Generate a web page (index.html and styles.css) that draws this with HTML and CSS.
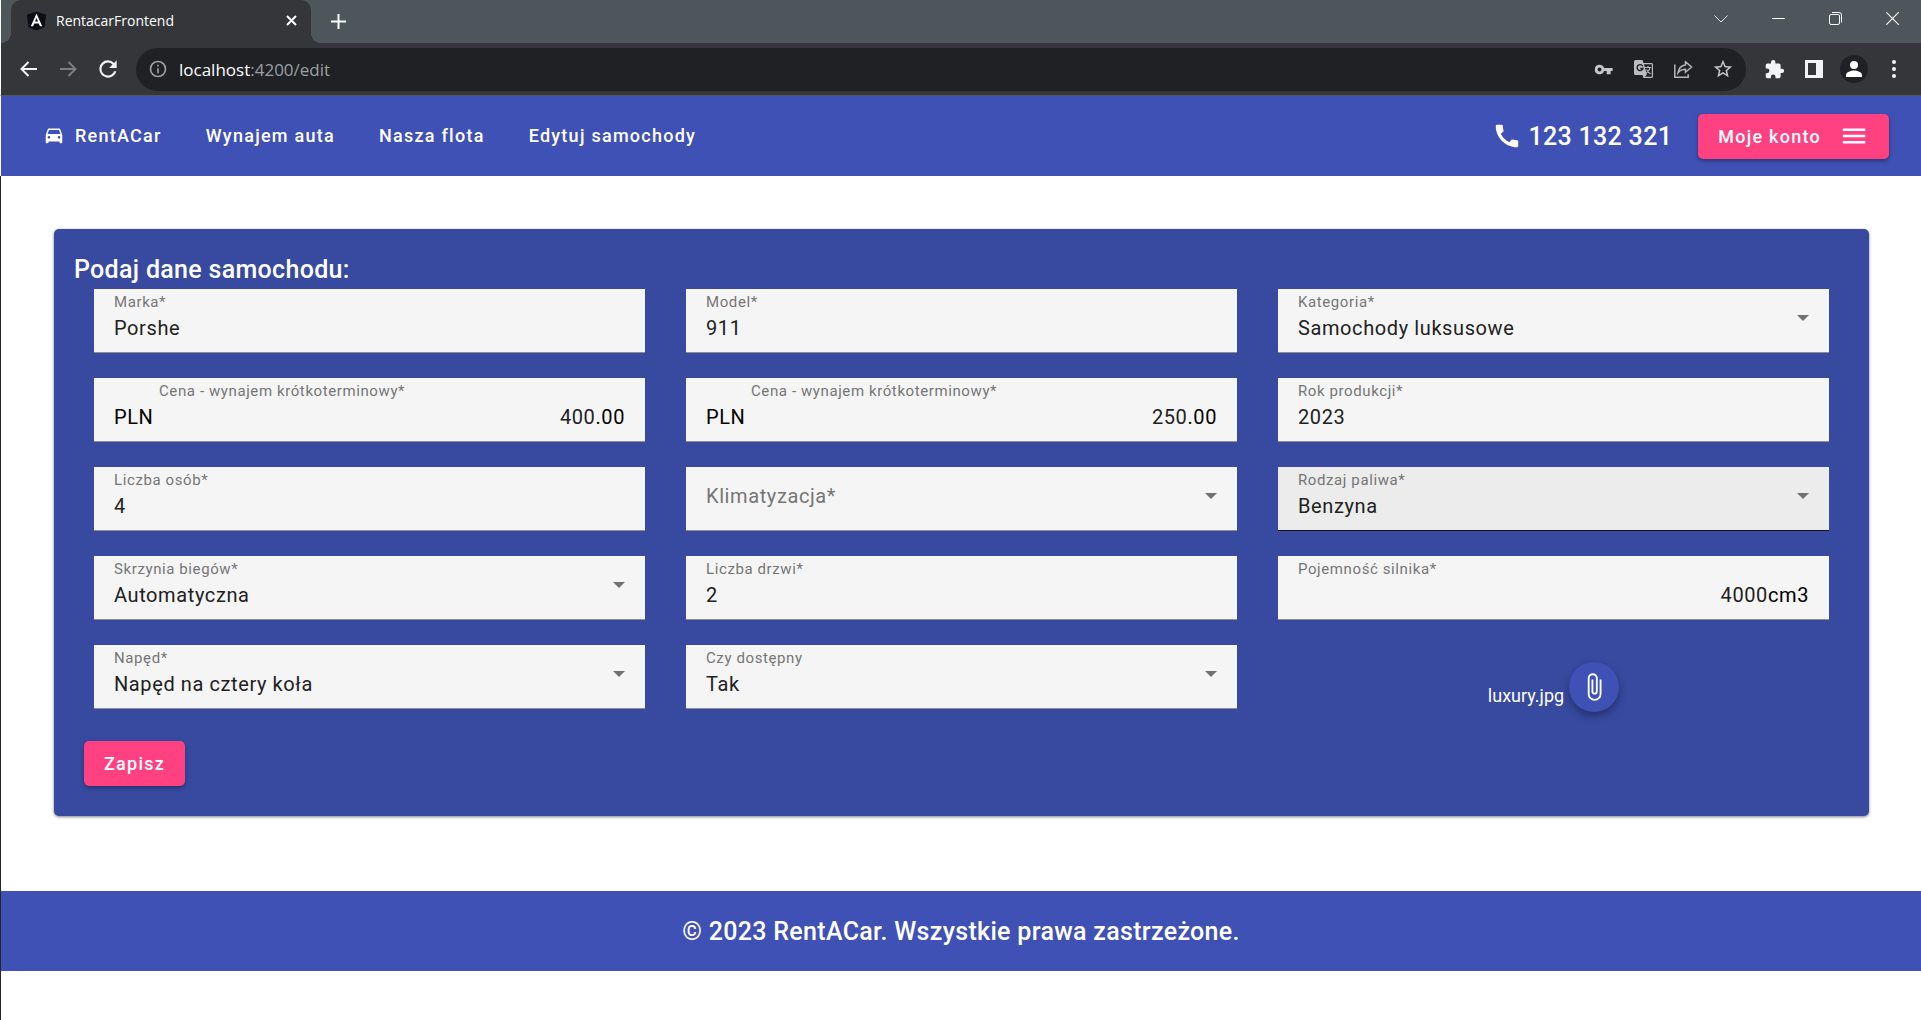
FILE: index.html
```html
<!DOCTYPE html>
<html lang="pl">
<head>
<meta charset="utf-8">
<meta name="viewport" content="width=device-width, initial-scale=1">
<title>RentacarFrontend</title>
<link rel="stylesheet" href="styles.css">
</head>
<body>
<div class="browser">
  <div class="tabstrip">
    <div class="tab">
      <svg class="tab-icon" viewBox="0 0 20 20"><path fill="#0c0e16" d="M10 0l10 3.500-1.500 13L10 20l-8.500-3.500L0 3.500z"/><path fill="#fff" fill-rule="evenodd" d="M10 2L4 15.500h2.400l1.200-3h4.800l1.200 3H16zM10 6.800l1.600 3.800H8.400z"/></svg>
      <span class="tab-title">RentacarFrontend</span>
      <button class="tab-close" aria-label="Zamknij kartę"><svg width="11" height="11" viewBox="0 0 11 11"><path d="M1 1l9 9M10 1l-9 9" stroke="#fff" stroke-width="2"/></svg></button>
    </div>
    <button class="tab-new" aria-label="Nowa karta"><svg width="15" height="15" viewBox="0 0 15 15"><path d="M7.500 0v15M0 7.500h15" stroke="#fff" stroke-width="2"/></svg></button>
    <div class="window-controls">
      <button aria-label="Szukaj kart"><svg width="14" height="8" viewBox="0 0 14 8"><path d="M.5.5L7 7 13.500.5" fill="none" stroke="#e4e6e7"/></svg></button>
      <button aria-label="Minimalizuj"><svg width="13" height="13" viewBox="0 0 13 13"><path d="M0 6.500h13" stroke="#fff"/></svg></button>
      <button aria-label="Przywróć"><svg width="13" height="13" viewBox="0 0 13 13"><g fill="none" stroke="#fff"><rect x=".5" y="2.500" width="10" height="10" rx="1.500"/><path d="M3 .5h7a2.500 2.500 0 0 1 2.500 2.500v7.500"/></g></svg></button>
      <button aria-label="Zamknij"><svg width="13" height="13" viewBox="0 0 13 13"><path d="M0 0l13 13M13 0L0 13" stroke="#fff" stroke-width="1.200"/></svg></button>
    </div>
  </div>
  <div class="toolbar">
    <button class="tool" aria-label="Wstecz"><svg width="17" height="16" viewBox="0 0 17 16"><path d="M17 8H2M8.500 1l-7 7 7 7" fill="none" stroke="#f1f3f4" stroke-width="2"/></svg></button>
    <button class="tool" aria-label="Dalej"><svg width="17" height="16" viewBox="0 0 17 16"><path d="M0 8h15M8.500 1l7 7-7 7" fill="none" stroke="#7d7e81" stroke-width="2"/></svg></button>
    <button class="tool" aria-label="Odśwież"><svg width="26" height="26" viewBox="0 0 24 24"><path fill="#f1f3f4" d="M17.650 6.350A7.960 7.960 0 0 0 12 4a8 8 0 1 0 7.730 10h-2.080A6 6 0 1 1 12 6c1.660 0 3.140.69 4.220 1.780L13 11h7V4z"/></svg></button>
    <div class="omnibox">
      <svg width="20" height="20" viewBox="0 0 24 24"><path fill="#9aa0a6" d="M11 7h2v2h-2zm0 4h2v6h-2zm1-9a10 10 0 1 0 0 20 10 10 0 0 0 0-20zm0 18a8 8 0 1 1 0-16 8 8 0 0 1 0 16z"/></svg>
      <span class="url"><span class="url-host">localhost</span>:4200/edit</span>
      <button class="tool" aria-label="Hasła"><svg width="19" height="19" viewBox="0 0 24 24"><path fill="#c4c7ca" d="M12.650 10A6 6 0 0 0 7 6a6 6 0 1 0 5.650 8H16v4h5v-4h2.500v-4zM7 14.500a2.500 2.500 0 1 1 0-5 2.500 2.500 0 0 1 0 5z"/></svg></button>
      <button class="tool" aria-label="Przetłumacz"><svg width="19" height="19" viewBox="0 0 19 19"><path fill="#babdc0" d="M1.500 0h7l1 3H17.500A1.500 1.500 0 0 1 19 4.500v12a1.500 1.500 0 0 1-1.500 1.500H9.500l-1-3h-7A1.500 1.500 0 0 1 0 13.500v-12A1.500 1.500 0 0 1 1.500 0z"/><path fill="#202124" d="M10 4.200h7.800v12.600h-6.900l2-2.200z"/><path d="M8.800 6.200A3 3 0 1 0 9 8.500H6.200" fill="none" stroke="#202124" stroke-width="1.400"/><path d="M11 7.500h6M14 6v1.500M16 7.500c-.5 2.500-2 4.500-4 5.500M12.500 9.500c1 2 2.500 3.500 4.200 4.200" fill="none" stroke="#babdc0" stroke-width="1.100"/></svg></button>
      <button class="tool" aria-label="Udostępnij"><svg width="19" height="18" viewBox="0 0 19 18"><g fill="none" stroke="#b4b7ba" stroke-width="1.500"><path d="M.8 4.500v12.700h13.400v-3"/><path d="M11.500 1.800l6 5.200-6 5.200V9.200c-3.500 0-5.500 1-7.500 3.600.6-4.500 3-7.400 7.500-7.900z"/></g></svg></button>
      <button class="tool" aria-label="Dodaj do zakładek"><svg width="22" height="22" viewBox="0 0 24 24"><path fill="#c8cbce" d="M22 9.240l-7.190-.62L12 2 9.190 8.630 2 9.240l5.460 4.730L5.820 21 12 17.270 18.180 21l-1.630-7.030zM12 15.400l-3.760 2.270 1-4.280-3.320-2.880 4.380-.38L12 6.100l1.710 4.040 4.380.38-3.320 2.880 1 4.280z"/></svg></button>
    </div>
    <button class="tool" aria-label="Rozszerzenia"><svg width="21" height="21" viewBox="0 0 24 24"><path fill="#f1f3f4" d="M20.500 11H19V7a2 2 0 0 0-2-2h-4V3.500a2.500 2.500 0 0 0-5 0V5H4a2 2 0 0 0-2 2v3.800h1.500a2.700 2.700 0 0 1 0 5.400H2V20c0 1.100.9 2 2 2h3.800v-1.500a2.700 2.700 0 0 1 5.400 0V22H17a2 2 0 0 0 2-2v-4h1.500a2.500 2.500 0 0 0 0-5z"/></svg></button>
    <button class="tool" aria-label="Panel boczny"><svg width="18" height="18" viewBox="0 0 18 18"><path fill="#f1f3f4" fill-rule="evenodd" d="M0 0h18v18H0zM3 3v12h8V3z"/></svg></button>
    <button class="tool" aria-label="Profil"><svg width="28" height="28" viewBox="0 0 28 28"><circle cx="14" cy="14" r="14" fill="#202124"/><circle cx="14" cy="10" r="4" fill="#fff"/><path fill="#fff" d="M6 22v-2c0-3 5-4.500 8-4.500s8 1.500 8 4.500v2z"/></svg></button>
    <button class="tool" aria-label="Menu"><svg width="4" height="18" viewBox="0 0 4 18"><g fill="#f1f3f4"><circle cx="2" cy="2" r="2"/><circle cx="2" cy="9" r="2"/><circle cx="2" cy="16" r="2"/></g></svg></button>
  </div>
</div>

<header class="navbar">
  <nav class="nav-links">
    <a href="#" class="nav-link"><svg class="car" width="22" height="22" viewBox="0 0 24 24"><path fill="#fff" d="M18.920 6.010A1.490 1.490 0 0 0 17.500 5h-11c-.66 0-1.210.42-1.420 1.010L3 12v8a1 1 0 0 0 1 1h1a1 1 0 0 0 1-1v-1h12v1a1 1 0 0 0 1 1h1a1 1 0 0 0 1-1v-8zM6.500 16a1.500 1.500 0 1 1 0-3 1.500 1.500 0 0 1 0 3zm11 0a1.500 1.500 0 1 1 0-3 1.500 1.500 0 0 1 0 3zM5 11l1.500-4.500h11L19 11z"/></svg>RentACar</a>
    <a href="#" class="nav-link">Wynajem auta</a>
    <a href="#" class="nav-link">Nasza flota</a>
    <a href="#" class="nav-link">Edytuj samochody</a>
  </nav>
  <div class="phone"><svg width="30" height="30" viewBox="0 0 24 24"><path fill="#fff" d="M20.010 15.380c-1.230 0-2.420-.2-3.530-.56a.977.977 0 0 0-1.010.24l-1.570 1.970c-2.830-1.350-5.480-3.900-6.890-6.830l1.950-1.660c.27-.28.35-.67.24-1.020-.37-1.110-.56-2.300-.56-3.530 0-.54-.45-.99-.99-.99H4.190C3.650 3 3 3.240 3 3.990 3 13.280 10.730 21 20.010 21c.71 0 .99-.63.99-1.180v-3.450c0-.54-.45-.99-.99-.99z"/></svg>123 132 321</div>
  <button class="btn account">Moje konto<svg width="30" height="30" viewBox="0 0 24 24"><path fill="#fff" d="M3 18h18v-2H3zm0-5h18v-2H3zm0-7v2h18V6z"/></svg></button>
</header>

<main class="page">
  <form class="card" onsubmit="return false">
    <h1 class="card-title">Podaj dane samochodu:</h1>
    <div class="fields">
      <div class="field"><label for="marka">Marka*</label><input id="marka" type="text" value="Porshe"></div>
      <div class="field"><label for="model">Model*</label><input id="model" type="text" value="911"></div>
      <div class="field"><label for="kategoria">Kategoria*</label><select id="kategoria"><option>Samochody luksusowe</option></select><span class="caret"></span></div>

      <div class="field field-price"><label for="cena1">Cena - wynajem krótkoterminowy*</label><span class="affix">PLN</span><input id="cena1" type="text" value="400"><span class="affix">.00</span></div>
      <div class="field field-price"><label for="cena2">Cena - wynajem krótkoterminowy*</label><span class="affix">PLN</span><input id="cena2" type="text" value="250"><span class="affix">.00</span></div>
      <div class="field"><label for="rok">Rok produkcji*</label><input id="rok" type="text" value="2023"></div>

      <div class="field"><label for="osoby">Liczba osób*</label><input id="osoby" type="text" value="4"></div>
      <div class="field field-empty"><label for="klima">Klimatyzacja*</label><select id="klima"><option></option></select><span class="caret"></span></div>
      <div class="field field-hover"><label for="paliwo">Rodzaj paliwa*</label><select id="paliwo"><option>Benzyna</option></select><span class="caret"></span></div>

      <div class="field"><label for="skrzynia">Skrzynia biegów*</label><select id="skrzynia"><option>Automatyczna</option></select><span class="caret"></span></div>
      <div class="field"><label for="drzwi">Liczba drzwi*</label><input id="drzwi" type="text" value="2"></div>
      <div class="field field-suffix"><label for="silnik">Pojemność silnika*</label><input id="silnik" type="text" value="4000"><span class="affix">cm3</span></div>

      <div class="field"><label for="naped">Napęd*</label><select id="naped"><option>Napęd na cztery koła</option></select><span class="caret"></span></div>
      <div class="field"><label for="dostepny">Czy dostępny</label><select id="dostepny"><option>Tak</option></select><span class="caret"></span></div>
      <div class="upload"><span>luxury.jpg</span><button type="button" class="fab" aria-label="Dodaj plik"><svg width="30" height="30" viewBox="0 0 24 24"><path fill="#fff" d="M16.500 6v11.500a4 4 0 0 1-8 0V5a2.500 2.500 0 0 1 5 0v10.500a1 1 0 0 1-2 0V6H10v9.500a2.500 2.500 0 0 0 5 0V5a4 4 0 0 0-8 0v12.500a5.500 5.500 0 0 0 11 0V6z"/></svg></button></div>
    </div>
    <button type="submit" class="btn save">Zapisz</button>
  </form>
</main>

<footer class="footer">© 2023 RentACar. Wszystkie prawa zastrzeżone.</footer>
</body>
</html>
```
FILE: styles.css
```css
* {
  box-sizing: border-box;
}

body {
  margin: 0;
  min-height: 100vh;
  display: flex;
  flex-direction: column;
  background: linear-gradient(90deg, #26272b 1px, #fff 1px);
  color: #fff;
  font-family: Roboto, sans-serif;
  font-size: 18px;
}

button {
  font: inherit;
  color: inherit;
  border: 0;
  padding: 0;
  background: none;
  cursor: pointer;
}

svg {
  display: block;
  flex: none;
}

/* Browser window */

.browser {
  border-left: 1px solid #fff;
  border-bottom: 1px solid #55565a;
  background: #35363a;
  font-family: "Open Sans", sans-serif;
}

.tabstrip {
  display: flex;
  height: 43px;
  padding-left: 10px;
  background: #4d565b;
}

.tab {
  position: relative;
  display: flex;
  align-items: center;
  width: 300px;
  padding: 0 14px 2px 16px;
  gap: 10px;
  border-radius: 10px 10px 0 0;
  background: #35363a;
  font-size: 14px;
}

.tab::before,
.tab::after {
  content: "";
  position: absolute;
  bottom: 0;
  width: 10px;
  height: 10px;
}

.tab::before {
  right: 100%;
  background: radial-gradient(circle at 0 0, #4d565b 10px, #35363a 10px);
}

.tab::after {
  left: 100%;
  background: radial-gradient(circle at 100% 0, #4d565b 10px, #35363a 10px);
}

.tab-icon {
  width: 19px;
  height: 20px;
}

.tab-title {
  flex: 1;
}

.tab-new {
  width: 54px;
  display: grid;
  place-items: center;
}

.window-controls {
  display: flex;
  margin-left: auto;
}

.window-controls button {
  width: 57px;
  padding: 0 1px 6px 0;
  display: grid;
  place-items: center;
}

.toolbar {
  display: flex;
  align-items: center;
  height: 52px;
  padding: 0 7px;
}

.tool {
  display: grid;
  place-items: center;
  width: 40px;
  height: 40px;
}

.omnibox {
  flex: 1;
  display: flex;
  align-items: center;
  height: 43px;
  margin: 0 8px;
  padding: 0 3px 0 12px;
  border-radius: 22px;
  background: #202124;
  font-size: 17px;
}

.url {
  flex: 1;
  margin-left: 11px;
  color: #9aa0a6;
}

.url-host {
  color: #fff;
}

/* Application bar */

.navbar {
  display: flex;
  align-items: center;
  height: 80px;
  padding: 0 32px 0 20px;
  border-left: 1px solid #fff;
  background: #3f51b5;
}

.nav-links {
  display: flex;
  flex: 1;
  padding-bottom: 2px;
}

.nav-link {
  display: flex;
  align-items: center;
  gap: 10px;
  padding: 0 22px;
  color: #fff;
  font-weight: 500;
  letter-spacing: 0.07em;
  text-decoration: none;
}

.phone {
  display: flex;
  align-items: center;
  gap: 6px;
  margin-right: 26px;
  font-size: 25px;
  font-weight: 500;
  letter-spacing: 0.0125em;
}

.btn {
  height: 45px;
  padding: 0 20px;
  border-radius: 5px;
  background: #ff4081;
  font-weight: 500;
  letter-spacing: 0.07em;
  box-shadow: 0 2px 4px rgba(0, 0, 0, 0.35);
}

.account {
  display: flex;
  align-items: center;
  gap: 18px;
}

/* Car form */

.page {
  padding: 53px 52px 53px 54px;
}

.card {
  padding: 20px 20px 30px;
  border-radius: 5px;
  background: #374aa0;
  box-shadow: 0 1px 3px rgba(0, 0, 0, 0.5);
}

.card-title {
  margin: 0;
  padding-top: 2px;
  font-size: 25px;
  font-weight: 500;
  letter-spacing: 0.0125em;
  line-height: 38px;
}

.fields {
  display: grid;
  grid-template-columns: repeat(3, 1fr);
  gap: 25px 41px;
  padding: 0 20px;
}

.field {
  display: grid;
  grid-template-columns: 1fr auto;
  grid-template-rows: 20px 24px;
  row-gap: 4px;
  height: 64px;
  padding: 3px 20px 0;
  border-bottom: 1px solid #8e8e90;
  background: #f5f5f5;
  color: #212121;
  font-size: 20px;
  letter-spacing: 0.03em;
}

.field label {
  grid-area: 1 / 1;
  color: #757575;
  font-size: 15px;
  line-height: 20px;
}

.field input,
.field select {
  grid-row: 2;
  width: 100%;
  min-width: 0;
  margin: 0;
  padding: 0;
  border: 0;
  outline: 0;
  appearance: none;
  background: none;
  color: inherit;
  font: inherit;
  letter-spacing: inherit;
  line-height: 24px;
}

.caret {
  grid-area: 1 / 2 / 3 / 3;
  align-self: center;
  margin-top: 3px;
  border: 6px solid transparent;
  border-top-color: #717171;
  border-bottom: 0;
}

.field-hover {
  border-bottom-color: #111;
  background: #ececec;
}

.field-empty label {
  grid-area: 1 / 1 / 3 / 2;
  align-self: center;
  margin-top: 3px;
  font-size: 20px;
  line-height: 24px;
}

.field-price {
  grid-template-columns: 45px 1fr auto;
}

.field-price label {
  grid-area: 1 / 2;
}

.field-price input,
.field-suffix input {
  text-align: right;
}

.affix {
  grid-row: 2;
  color: #000;
  line-height: 24px;
}

.upload {
  display: flex;
  align-items: center;
  justify-content: center;
  gap: 5px;
  padding-top: 17px;
}

.upload span {
  padding-top: 17px;
}

.fab {
  display: grid;
  place-items: center;
  width: 50px;
  height: 50px;
  border-radius: 50%;
  background: #3f51b5;
  box-shadow: 0 4px 8px rgba(0, 0, 0, 0.35);
}

.save {
  display: block;
  margin: 29px 0 0 10px;
}

.footer {
  display: grid;
  place-items: center;
  height: 80px;
  margin: 22px 0 0 1px;
  background: #3f51b5;
  font-size: 25px;
  font-weight: 500;
  letter-spacing: 0.0125em;
}
```
